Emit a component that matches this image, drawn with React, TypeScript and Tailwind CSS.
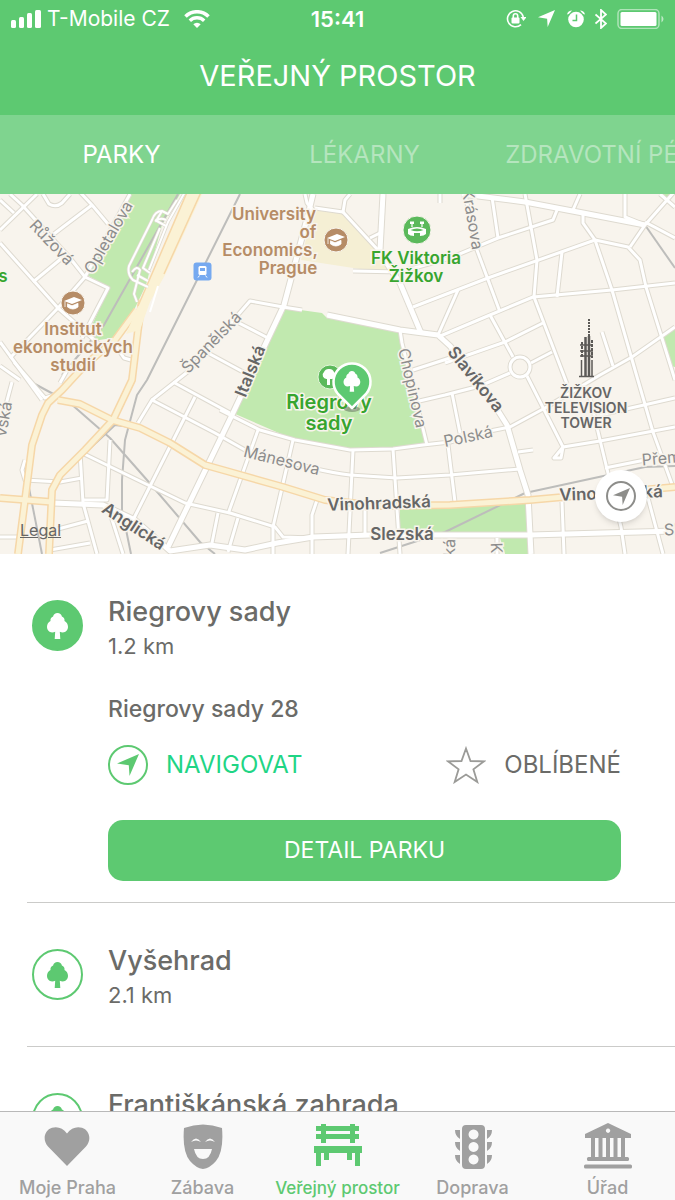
import { useState } from 'react';
import type { ReactNode } from 'react';
import { clsx } from 'clsx';

const CATEGORIES = ['PARKY', 'LÉKARNY', 'ZDRAVOTNÍ PÉČE'];

const PARKS = [
  { name: 'Riegrovy sady', distance: '1.2 km', address: 'Riegrovy sady 28' },
  { name: 'Vyšehrad', distance: '2.1 km', address: 'V Pevnosti 159' },
  { name: 'Františkánská zahrada', distance: '2.3 km', address: 'Jungmannovo náměstí' },
];

const TREE =
  'M10.5 0c2.200 0 4 1.500 4.400 3.500 1.900.6 3 2.500 2.600 4.500C19.600 9 21 11.200 21 13.800c0 3.200-2.200 5.600-5.200 5.600-1.100 0-2.100-.2-3-.6l.5 7.200h-5.600l.5-7.200c-.9.4-1.900.6-3 .6C2.200 19.400 0 17 0 13.800 0 11.200 1.400 9 3.500 8c-.4-2 .7-3.900 2.600-4.500C6.500 1.500 8.300 0 10.500 0z';

const ARROW = 'M22 0 12.500 22 11.800 11.200 0 9.500z';

// streets of the base map, drawn twice: casing first, then the surface
const STREETS = [
  'M0 230 37 194',
  'M0 200 14 213',
  'M10 194 22 205 70 258 85 277 108 288 82 338',
  'M43 194 49 204Q56 208 62 203L70 194',
  'M0 243 58 308 100 345',
  'M33 282 62 258',
  'M50 237 63 227 92 205M78 190 92 205 108 224',
  'M130 194 85 277 58 308 10 358',
  'M0 342 42 400',
  'M0 366 20 380M12 382 0 427',
  'M14 362 45 398 60 393M115 345 124 358 131 360',
  'M60 383 70 365',
  'M25 460 22 470 25 480 60 482 82 478',
  'M80 452 83 503 97 554',
  'M80 452 148 485 185 503 230 513 275 527 283 537 313 538',
  'M110 440 107 500 83 500M110 513 123 554',
  'M58 529 88 521M50 550 90 543M0 537 17 537',
  'M138 423 152 400 215 433 245 450Q320 472 350 475L397 478 450 475 520 469',
  'M152 400 190 370 250 301 283 307 302 310',
  'M173 382 230 413M208 353 245 373M237 322 268 338',
  'M195 397 133 520M218 513 212 543M238 518 228 552',
  'M220 410 260 430 295 440 350 450 393 449 423 445 450 442 490 431 510 427 545 408 600 375 632 357 675 327',
  'M258 430 228 514M293 440 273 527V554M353 450 348 554M393 449 400 554',
  'M317 500 312 515V554M365 510V535',
  'M315 208 343 212 345 200 350 194M305 194 307 203 313 210',
  'M343 212 378 250M370 238 380 233M353 271 400 272 450 258 498 238 553 220 557 210',
  'M400 330 402 343 427 445',
  'M413 307 488 278 595 240 628 247 640 260 646 287 675 380',
  'M630 247 645 225 675 191M625 194V217L645 225M645 222 675 238M660 194 675 207M573 210 580 194',
  'M492 197 498 238M525 194 537 260 534 297 567 384',
  'M583 213V223L595 240 612 290 635 370 653 432 673 487',
  'M562 252 557 297',
  'M438 337 490 315 533 297 612 290 675 283',
  'M465 194 477 250 500 312M458 290 438 335',
  'M445 363 505 342 543 323M490 315 513 357M531 363 552 352',
  'M510 373 480 386 445 395 415 402M413 370 450 358',
  'M527 376 563 447 600 441 675 427M563 447 554 458 561 458 563 447',
  'M590 398 600 440 621 527 625 554',
  'M452 393 460 433M448 445 455 502M518 452 533 450',
  'M605 468 645 460M600 415 675 398',
  'M562 502 564 554M648 498 663 554M602 332 613 366M497 538V554',
  'M440 194V203',
];

const WIDE_STREETS = [
  'M313 194 308 215 284 305 232 415 168 547',
  'M383 194 380 250',
  'M378 250 400 283 421 333',
  'M327 315 400 330 438 335 450 346 485 390 507 425 520 470 528 495 531 554',
  'M462 194 525 202 583 213 645 225',
  'M53 503 103 505 135 520 170 551 210 545 245 550 277 543 313 537 370 535 450 535 530 535 675 531',
];

const HIGHWAYS = [
  'M137 310 115 340 85 365 62 390 48 403 42 415 32 445 25 500 18 554',
  'M142 300 138 330 132 380 113 420 85 450 60 475 52 490 49 554',
  'M58 400 80 404 112 420 140 428 170 443 205 465 230 472 283 487 325 500 380 506 450 505 530 500 675 487',
  'M0 498 52 502',
];

const RAILS = [
  'M178 194 104 325 62 375',
  'M240 194 147 380 137 395 125 440 122 480 122 510 131 554',
  'M33 383 70 403 110 438 147 480 200 542 215 554',
  'M83 455 115 425 140 428 170 445',
  'M28 483 42 554',
  'M380 553 445 532 525 493 645 467 675 466',
  'M645 225 675 268',
];

function Glyph({ d, className, box }: { d: string; className: string; box: string }) {
  return (
    <svg viewBox={box} className={className} fill="currentColor" aria-hidden="true">
      <path d={d} />
    </svg>
  );
}

function StatusBar() {
  return (
    <div className="flex h-[37px] items-center px-[11px] text-[21px] leading-6 text-white">
      <div className="flex flex-1 items-center">
        <svg viewBox="0 0 30 18" className="h-[18px] w-[30px]" fill="currentColor">
          <rect y="10" width="5" height="8" rx="1.5" />
          <rect x="8" y="7" width="5" height="11" rx="1.5" />
          <rect x="16" y="3" width="5" height="15" rx="1.5" />
          <rect x="24" width="6" height="18" rx="1.5" />
        </svg>
        <span className="ml-1.5">T-Mobile CZ</span>
        <svg viewBox="0 0 26 18" className="ml-3.5 h-[18px] w-[26px]" fill="none" stroke="currentColor">
          <path d="M1.500 6.500a16.300 16.300 0 0 1 23 0" strokeWidth="3.600" />
          <path d="M5.800 10.800a10.200 10.200 0 0 1 14.400 0" strokeWidth="3.400" />
          <path d="M13 18 9.300 14.300a5.200 5.200 0 0 1 7.400 0z" fill="currentColor" stroke="none" />
        </svg>
      </div>
      <time className="text-[22px] font-semibold">15:41</time>
      <div className="flex flex-1 items-center justify-end">
        <svg viewBox="0 0 20 20" className="mr-3 size-5" fill="none" stroke="currentColor" strokeWidth="1.600">
          <path d="M17.300 8A8 8 0 1 0 15 15.600" />
          <path d="M14.500 8h6l-3 4z" fill="currentColor" stroke="none" />
          <rect x="5.500" y="8.500" width="8" height="6" rx="1" fill="currentColor" stroke="none" />
          <path d="M7.300 9V7a2.200 2.200 0 0 1 4.400 0v2" />
        </svg>
        <Glyph d={ARROW} box="0 0 22 22" className="mr-3 size-[17px]" />
        <svg viewBox="0 0 18 18" className="mr-2.5 size-[18px]" fill="currentColor">
          <circle cx="9" cy="9.500" r="7.800" />
          <path d="M0 4.500C.5 2 2.500.5 5 .5L3.500 2.200 1.800 4z" />
          <path d="M18 4.500C17.500 2 15.500.5 13 .5l1.500 1.700L16.200 4z" />
          <path d="M9.500 4.500v6H5.500" fill="none" stroke="#5dc971" strokeWidth="1.500" />
        </svg>
        <svg viewBox="0 0 12 20" className="mr-2.5 h-5 w-3" fill="none" stroke="currentColor" strokeWidth="1.800">
          <path d="M.5 5.500 11 14.500 6 19V1l5 4.500L.5 14.500" />
        </svg>
        <svg viewBox="0 0 47 20" className="h-5 w-[47px]" fill="currentColor">
          <rect x="1" y="0.500" width="41" height="19" rx="4" fill="none" stroke="currentColor" strokeOpacity=".5" strokeWidth="1.500" />
          <rect x="3.500" y="3" width="36" height="14" rx="1.500" />
          <path d="M44.500 6.500q4 3.500 0 7z" opacity=".6" />
        </svg>
      </div>
    </div>
  );
}

interface LabelProps {
  x: number;
  y: number;
  rotate?: number;
  className?: string;
  children: string;
}

function StreetLabel({ x, y, rotate = 0, className, children }: LabelProps) {
  return (
    <text
      x={x}
      y={y}
      dy="6"
      textAnchor="middle"
      transform={`rotate(${rotate} ${x} ${y})`}
      className={clsx('stroke-[#f8f4ed] stroke-[3px] [paint-order:stroke]', className ?? 'fill-[#8c8c8c] text-[16px]')}
    >
      {children}
    </text>
  );
}

const MAIN = 'fill-[#666666] text-[17px] font-semibold';
const POI_BROWN = 'fill-[#b68c66] text-[17px] font-semibold';
const POI_GREEN = 'fill-[#37a52f] text-[17px] font-semibold';
const LANDMARK = 'fill-[#666666] text-[14px] font-semibold';

function SchoolPin({ x, y }: { x: number; y: number }) {
  return (
    <g transform={`translate(${x} ${y})`}>
      <circle r="12" fill="#b68c66" stroke="#f8f4ed" />
      <path d="M-9-2 1-6 9-3-1 1z" fill="#fff" />
      <path d="M-5.500.8V4Q0 8 5 4V.3L-1 2.800zM-8-1.500V4" fill="#fff" stroke="#fff" strokeWidth=".8" />
    </g>
  );
}

function CityMap() {
  return (
    <svg viewBox="0 194 675 360" preserveAspectRatio="xMidYMid slice" className="h-full w-full" role="img" aria-label="Mapa">
      <rect x="-700" y="194" width="2100" height="360" fill="#f8f4ed" />
      <g fill="#c1e9af">
        <path d="M131 194H180L162 225 152 262 146 285 135 308 125 325 112 338 93 341 92 325 109 288 87 275z" />
        <path d="M286 308 322 313 326 317 400 331 427 445 393 449 350 450 295 440 233 413z" />
        <path d="M400 509 528 503V532L400 533zM500 538H528V554H505z" />
        <path d="M662 336 675 328V367L670 366zM662 194H672L667 201z" />
      </g>
      <path d="M313 210 343 212 378 250 392 270 360 269 301 260z" fill="#f5efd4" />
      <g fill="none" strokeLinejoin="round">
        {RAILS.map((d) => (
          <path key={d} d={d} stroke="#bdbdbb" strokeWidth="2" />
        ))}
        {STREETS.map((d) => (
          <path key={d} d={d} stroke="#dedad0" strokeWidth="5" />
        ))}
        {WIDE_STREETS.map((d) => (
          <path key={d} d={d} stroke="#dedad0" strokeWidth="7" />
        ))}
        <circle cx="520" cy="367" r="10" stroke="#dedad0" strokeWidth="5" />
        {STREETS.map((d) => (
          <path key={d} d={d} stroke="#fff" strokeWidth="3" />
        ))}
        <circle cx="520" cy="367" r="10" stroke="#fff" strokeWidth="3" />
        {WIDE_STREETS.map((d) => (
          <path key={d} d={d} stroke="#fff" strokeWidth="5" />
        ))}
        {HIGHWAYS.map((d) => (
          <path key={d} d={d} stroke="#f6d7a8" strokeWidth="8" />
        ))}
        {HIGHWAYS.map((d) => (
          <path key={d} d={d} stroke="#fbf2d5" strokeWidth="5" />
        ))}
      </g>
      {/* station forecourt and the trunk road beside it */}
      <path d="M187 190H204L165 275 150 302 140 330 126 334 138 306 150 278z" fill="#fbf2d5" />
      <path d="M188 190 151 276 138 306M202 190 164 274" fill="none" stroke="#f6d7a8" strokeWidth="1.500" />
      <path d="M158 286 150 312" fill="none" stroke="#fff" strokeWidth="2" />
      {['#dedad0', '#fff'].map((color, i) => (
        <g key={color} fill="none" stroke={color} strokeWidth={i ? 2 : 3.5} strokeLinejoin="round">
          <path d="M185 192 168 222 149 270M177 200 168 214 162 211Q155 211 152 220L129 266Q127 274 133 280L148 287" />
          <path d="M155 220 166 226M162 211 156 221Q160 217 166 220M137 302 134 294 140 270Q137 265 132 272M137 275 148 281" />
          <path d="M160 228 143 268 150 273" />
        </g>
      ))}

      <StreetLabel x={52} y={242} rotate={46}>Růžová</StreetLabel>
      <StreetLabel x={108} y={237} rotate={-60}>Opletalova</StreetLabel>
      <StreetLabel x={211} y={342} rotate={-46}>Španělská</StreetLabel>
      <StreetLabel x={473} y={219} rotate={80}>Krásova</StreetLabel>
      <StreetLabel x={413} y={388} rotate={77}>Chopinova</StreetLabel>
      <StreetLabel x={282} y={460} rotate={14}>Mánesova</StreetLabel>
      <StreetLabel x={468} y={436} rotate={-12}>Polská</StreetLabel>
      <StreetLabel x={694} y={455} rotate={-5}>Přemyslovská</StreetLabel>
      <StreetLabel x={693} y={528} rotate={-3}>Slezská</StreetLabel>
      <StreetLabel x={3} y={419} rotate={-80}>vská</StreetLabel>
      <StreetLabel x={448} y={576} rotate={-88}>Budečská</StreetLabel>
      <StreetLabel x={497} y={548} rotate={88}>K</StreetLabel>
      <StreetLabel x={250} y={371} rotate={-68} className={MAIN}>Italská</StreetLabel>
      <StreetLabel x={476} y={379} rotate={51} className={MAIN}>Slavíkova</StreetLabel>
      <StreetLabel x={379} y={503} rotate={-2} className={MAIN}>Vinohradská</StreetLabel>
      <StreetLabel x={611} y={493} rotate={-2} className={MAIN}>Vinohradská</StreetLabel>
      <StreetLabel x={402} y={534} className={MAIN}>Slezská</StreetLabel>
      <StreetLabel x={134} y={526} rotate={33} className={MAIN}>Anglická</StreetLabel>

      <StreetLabel x={73} y={329} className={POI_BROWN}>Institut</StreetLabel>
      <StreetLabel x={73} y={347} className={POI_BROWN}>ekonomických</StreetLabel>
      <StreetLabel x={73} y={365} className={POI_BROWN}>studií</StreetLabel>
      <StreetLabel x={274} y={214} className={POI_BROWN}>University</StreetLabel>
      <StreetLabel x={308} y={232} className={POI_BROWN}>of</StreetLabel>
      <StreetLabel x={270} y={250} className={POI_BROWN}>Economics,</StreetLabel>
      <StreetLabel x={288} y={268} className={POI_BROWN}>Prague</StreetLabel>
      <SchoolPin x={73} y={303} />
      <SchoolPin x={336} y={240} />

      <StreetLabel x={416} y={258} className={POI_GREEN}>FK Viktoria</StreetLabel>
      <StreetLabel x={416} y={276} className={POI_GREEN}>Žižkov</StreetLabel>
      <StreetLabel x={3} y={276} className={POI_GREEN}>s</StreetLabel>
      <g transform="translate(417 230)">
        <circle r="14" fill="#5bb95b" stroke="#f8f4ed" />
        <path d="M-9-1Q0-5 9-1V4Q7 6 3 6V3H-3V6Q-7 6-9 4z" fill="#fff" />
        <path d="M-6.500 0Q0-3 6.500 0 0 2.500-6.500 0z" fill="#5bb95b" />
        <path d="M-5-3V-7M5-3V-7" fill="none" stroke="#fff" strokeWidth="1.200" />
        <path d="M-7-8.500H-3V-6H-7zM3-8.500H7V-6H3z" fill="#fff" />
      </g>

      <g transform="translate(202.500 271.500)">
        <rect x="-9" y="-9" width="18" height="18" rx="3" fill="#76a9f0" />
        <rect x="-4" y="-5.500" width="8" height="9" rx="1.500" fill="#fff" />
        <path d="M-2.500-3.500H2.500V-.5H-2.500z" fill="#76a9f0" />
        <path d="M-3 4-4.500 6M3 4 4.500 6" stroke="#fff" />
      </g>

      {/* television tower */}
      <g fill="none" stroke="#5c5a57">
        <path d="M589 319V338" strokeWidth="2" strokeDasharray="2 1" />
        <path d="M589 336V377M585.500 337V377" strokeWidth="2.500" />
        <path d="M581.500 360V377M592 360V377" strokeWidth="1.500" />
        <path d="M582 342V357M592 340V358" strokeWidth="2" strokeDasharray="3 1" />
        <path d="M580 345H593M580 351H593M580 356H593M579 376.500H594" strokeWidth="1.500" />
      </g>
      <StreetLabel x={586} y={392} className={LANDMARK}>ŽIŽKOV</StreetLabel>
      <StreetLabel x={586} y={407} className={LANDMARK}>TELEVISION</StreetLabel>
      <StreetLabel x={586} y={422} className={LANDMARK}>TOWER</StreetLabel>

      <circle cx="330" cy="377" r="12" fill="#5bb95b" stroke="#e4f5da" />
      <path d="M329 369a5 5 0 0 1 5 3 4 4 0 0 1-2 7h-2v6h-3v-6a4 4 0 0 1-3-7 5 5 0 0 1 5-3z" fill="#fff" />
      <StreetLabel x={329} y={403} className="fill-[#37a52f] text-xl font-semibold">Riegrovy</StreetLabel>
      <StreetLabel x={329} y={424} className="fill-[#37a52f] text-xl font-semibold">sady</StreetLabel>
      <ellipse cx="352" cy="409" rx="8" ry="3" fill="#6d7d66" opacity=".6" />
      <path d="M352 408 338 394A18.500 18.500 0 1 1 366 394z" fill="#5dc971" stroke="#fff" strokeWidth="2.500" strokeLinejoin="round" />
      <path d={TREE} transform="translate(343.500 371) scale(.8)" fill="#fff" />
    </svg>
  );
}

const TAB_ICONS: Record<string, ReactNode> = {
  'Moje Praha': <path d="M23 43 4 23.500C-2 17 .5 7 8 4.800c5.500-1.600 11 .2 15 5.700 4-5.500 9.500-7.300 15-5.700C45.500 7 48 17 42 23.500z" />,
  Zábava: (
    <path
      fillRule="evenodd"
      d="M5 5Q24-2 43 5 45 28 37 38 31 45 24 46 17 45 11 38 3 28 5 5zM12 19Q17 12 22 19 17 16 12 19zM26 19Q31 12 36 19 31 16 26 19zM15 26H33Q31 36 24 36 17 36 15 26z"
    />
  ),
  'Veřejný prostor': (
    <path d="M7 1h5v2h24V1h5v2h4v5h-4v3h4v5h-4v4h-5v-4H12v4H7v-4H2v-5h5V8H2V3h5zM12 8v3h24V8zM0 23h48v7h-2v13h-5V30h-3v7h-5v-7H15v7h-5v-7H7v13H2V30H0z" />
  ),
  Doprava: (
    <>
      <path fillRule="evenodd" d="M17 2h15a4 4 0 0 1 4 4v36a4 4 0 0 1-4 4H17a4 4 0 0 1-4-4V6a4 4 0 0 1 4-4zM24.500 6.500a5 5 0 1 0 .1 0zM24.500 19a5 5 0 1 0 .1 0zM24.500 31.500a5 5 0 1 0 .1 0z" />
      <path d="M6 7h5v9Q6 13 6 7zM6 19h5v9Q6 25 6 19zM6 32h5v9Q6 38 6 32zM43 7h-5v9Q43 13 43 7zM43 19h-5v9Q43 25 43 19zM43 32h-5v9Q43 38 43 32z" />
    </>
  ),
  Úřad: (
    <>
      <path fillRule="evenodd" d="M24 0 47 11v4H1v-4zM24 5.500a2.200 2.200 0 1 0 .1 0z" />
      <path d="M7 15h4v20H7zM14.500 15h4v20h-4zM22 15h4v20h-4zM29.500 15h4v20h-4zM37 15h4v20h-4z" />
      <rect x="3" y="34" width="42" height="4" rx="1.500" />
      <rect y="41.500" width="48" height="4" rx="1.500" />
    </>
  ),
};

export default function App() {
  const [category, setCategory] = useState('PARKY');
  const [openPark, setOpenPark] = useState('Riegrovy sady');
  const [section, setSection] = useState('Veřejný prostor');

  return (
    <div className="flex h-screen flex-col overflow-hidden bg-white font-['Inter','Noto_Sans',sans-serif]">
      <header className="h-[115px] shrink-0 bg-[#5dc971]">
        <StatusBar />
        <h1 className="mt-5 text-center text-[29px] leading-[38px] text-white">VEŘEJNÝ PROSTOR</h1>
      </header>

      <nav className="flex h-[79px] shrink-0 overflow-hidden bg-[#7fd48f]">
        {CATEGORIES.map((name) => (
          <button
            key={name}
            type="button"
            onClick={() => setCategory(name)}
            className={clsx(
              'w-[36%] shrink-0 whitespace-nowrap pt-px text-center text-[24px] leading-8',
              name === category ? 'text-white' : 'text-[#b5e5be]',
            )}
          >
            {name}
          </button>
        ))}
      </nav>

      <section className="relative h-[360px] shrink-0 overflow-hidden">
        <CityMap />
        <a href="#legal" className="absolute bottom-3 left-5 text-base leading-6 text-[#666] underline">
          Legal
        </a>
        <button
          type="button"
          aria-label="Moje poloha"
          className="absolute right-7 bottom-8 flex size-[52px] items-center justify-center rounded-full bg-white text-[#8d8d8a] shadow-md"
        >
          <span className="flex size-[30px] items-center justify-center rounded-full border-2 border-current">
            <Glyph d={ARROW} box="0 0 22 22" className="size-[17px]" />
          </span>
        </button>
      </section>

      <ul className="min-h-0 flex-1 overflow-hidden pl-[27px] text-[#6b6b68]">
        {PARKS.map((park) => {
          const isOpen = park.name === openPark;

          return (
            <li key={park.name} className="border-b border-[#cbcbc9] pl-[5px]">
              <div className={clsx('flex pt-[42px]', isOpen ? 'pb-[21px]' : 'pb-[37px]')}>
                <div
                  className={clsx(
                    'mt-1 flex size-[51px] shrink-0 items-center justify-center rounded-full border-2 border-[#5dc971]',
                    isOpen ? 'bg-[#5dc971] text-white' : 'text-[#5dc971]',
                  )}
                >
                  <Glyph d={TREE} box="0 0 21 26" className="h-[26px] w-[21px]" />
                </div>
                <div className="ml-[25px] flex-1 pr-[54px]">
                  <button type="button" onClick={() => setOpenPark(park.name)} className="block text-left">
                    <span className="block text-[27px] leading-8 font-medium">{park.name}</span>
                    <span className="mt-1 block text-[22px] leading-7">{park.distance}</span>
                  </button>
                  {isOpen && (
                    <>
                      <p className="mt-[33px] text-[23px] leading-8 font-medium">{park.address}</p>
                      <div className="mt-5 flex h-10 items-center justify-between text-[24px]">
                        <button type="button" className="flex items-center text-[#1fd585]">
                          <span className="mr-[18px] flex size-10 items-center justify-center rounded-full border-2 border-[#5dc971] text-[#5dc971]">
                            <Glyph d={ARROW} box="0 0 22 22" className="size-[22px]" />
                          </span>
                          NAVIGOVAT
                        </button>
                        <button type="button" className="flex items-center">
                          <svg viewBox="0 0 40 38" className="mr-[18px] h-[38px] w-10" fill="none" stroke="#9b9b98" strokeWidth="1.800">
                            <path d="M20 2.500 24.500 15 38 15.300 27.400 23.300 31.300 36 20 28.500 8.700 36 12.600 23.300 2 15.300 15.500 15z" />
                          </svg>
                          OBLÍBENÉ
                        </button>
                      </div>
                      <button
                        type="button"
                        className="mt-[35px] block h-[61px] w-full rounded-[15px] bg-[#5dc971] text-[23px] text-white"
                      >
                        DETAIL PARKU
                      </button>
                    </>
                  )}
                </div>
              </div>
            </li>
          );
        })}
      </ul>

      <nav className="flex h-[89px] shrink-0 border-t border-[#b9b9b9] bg-[#f9f9f9]">
        {Object.entries(TAB_ICONS).map(([name, icon]) => (
          <button
            key={name}
            type="button"
            onClick={() => setSection(name)}
            className={clsx(
              'flex flex-1 basis-0 flex-col items-center pt-[11px] leading-6 font-medium whitespace-nowrap',
              name === section ? 'text-[17px] text-[#5dc971]' : 'text-[18px] text-[#a0a0a0]',
            )}
          >
            <svg viewBox="0 0 48 46" className="h-[46px] w-12" fill="currentColor" aria-hidden="true">
              {icon}
            </svg>
            <span className="mt-[7px]">{name}</span>
          </button>
        ))}
      </nav>
    </div>
  );
}
